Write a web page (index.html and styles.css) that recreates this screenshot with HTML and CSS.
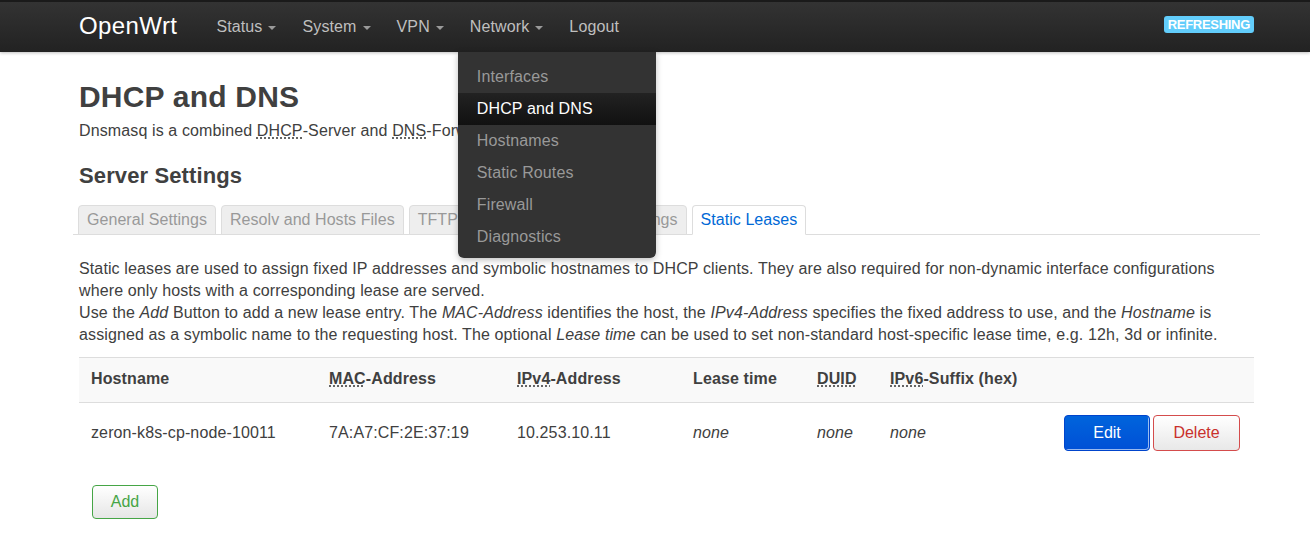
FILE: index.html
```html
<!DOCTYPE html>
<html lang="en">
<head>
<meta charset="utf-8">
<title>OpenWrt - DHCP and DNS</title>
<link rel="stylesheet" href="styles.css">
</head>
<body>
<header class="navbar">
  <div class="nav-inner">
    <a class="brand" href="#">OpenWrt</a>
    <ul class="nav">
      <li><a href="#">Status<span class="caret"></span></a></li>
      <li><a href="#">System<span class="caret"></span></a></li>
      <li><a href="#">VPN<span class="caret"></span></a></li>
      <li class="has-menu"><a href="#">Network<span class="caret"></span></a>
        <ul class="dropdown">
          <li><a href="#">Interfaces</a></li>
          <li class="active"><a href="#">DHCP and DNS</a></li>
          <li><a href="#">Hostnames</a></li>
          <li><a href="#">Static Routes</a></li>
          <li><a href="#">Firewall</a></li>
          <li><a href="#">Diagnostics</a></li>
        </ul>
      </li>
      <li><a href="#">Logout</a></li>
    </ul>
    <span class="badge">REFRESHING</span>
  </div>
</header>

<main class="container">
  <h1 class="title">DHCP and DNS</h1>
  <p class="lead">Dnsmasq is a combined <abbr title="Dynamic Host Configuration Protocol">DHCP</abbr>-Server and <abbr title="Domain Name System">DNS</abbr>-Forwarder for <abbr title="Network Address Translation">NAT</abbr> firewalls</p>

  <h2 class="section">Server Settings</h2>
  <ul class="tabs">
    <li><a href="#">General Settings</a></li>
    <li><a href="#">Resolv and Hosts Files</a></li>
    <li><a href="#">TFTP Settings</a></li>
    <li><a href="#">Advanced Settings</a></li>
    <li class="active"><a href="#">Static Leases</a></li>
  </ul>

  <div class="panel">
    <p class="desc">Static leases are used to assign fixed IP addresses and symbolic hostnames to DHCP clients. They are also required for non-dynamic interface configurations where only hosts with a corresponding lease are served.<br>Use the <em>Add</em> Button to add a new lease entry. The <em>MAC-Address</em> identifies the host, the <em>IPv4-Address</em> specifies the fixed address to use, and the <em>Hostname</em> is assigned as a symbolic name to the requesting host. The optional <em>Lease time</em> can be used to set non-standard host-specific lease time, e.g. 12h, 3d or infinite.</p>

    <table class="leases">
      <colgroup>
        <col class="c1"><col class="c2"><col class="c3"><col class="c4"><col class="c5"><col class="c6"><col>
      </colgroup>
      <thead>
        <tr>
          <th>Hostname</th>
          <th><abbr title="Media Access Control">MAC</abbr>-Address</th>
          <th><abbr title="Internet Protocol Version 4">IPv4</abbr>-Address</th>
          <th>Lease time</th>
          <th><abbr title="DHCP Unique Identifier">DUID</abbr></th>
          <th><abbr title="Internet Protocol Version 6">IPv6</abbr>-Suffix (hex)</th>
          <th></th>
        </tr>
      </thead>
      <tbody>
        <tr>
          <td>zeron-k8s-cp-node-10011</td>
          <td>7A:A7:CF:2E:37:19</td>
          <td>10.253.10.11</td>
          <td><em>none</em></td>
          <td><em>none</em></td>
          <td><em>none</em></td>
          <td class="actions"><button class="btn btn-edit">Edit</button><button class="btn btn-delete">Delete</button></td>
        </tr>
      </tbody>
    </table>

    <div class="add-row"><button class="btn btn-add">Add</button></div>
  </div>
</main>
</body>
</html>
```

FILE: styles.css
```css
* { box-sizing: border-box; }

html, body {
  margin: 0;
  padding: 0;
  background: #fff;
}

body {
  font-family: "Liberation Sans", Arial, Helvetica, sans-serif;
  font-size: 16px;
  line-height: 22px;
  letter-spacing: 0.12px;
  color: #404040;
}

a { text-decoration: none; }

abbr[title] {
  text-decoration: underline dotted;
  text-underline-offset: 2px;
  cursor: help;
}

/* ---------- Navbar ---------- */
.navbar {
  height: 52px;
  background: linear-gradient(to bottom, #333 0%, #222 100%);
  border-top: 2px solid #1a1a1a;
  box-shadow: 0 1px 3px rgba(0, 0, 0, .25);
  position: relative;
  z-index: 10;
}

.nav-inner {
  height: 50px;
  display: flex;
  align-items: center;
  padding: 0 56px 0 79px;
}

.brand {
  color: #fff;
  font-size: 24px;
  line-height: 30px;
  letter-spacing: 0.4px;
  margin-right: 39px;
  margin-top: -2px;
}

.nav {
  list-style: none;
  margin: 0;
  padding: 0;
  display: flex;
  gap: 26px;
  flex: 1;
}

.nav > li { position: relative; }

.nav > li > a {
  color: #bfbfbf;
  font-size: 16px;
  display: flex;
  align-items: center;
}

.caret {
  display: inline-block;
  width: 0;
  height: 0;
  margin-left: 6px;
  margin-top: 2px;
  border-left: 4px solid transparent;
  border-right: 4px solid transparent;
  border-top: 4px solid #9a9a9a;
}

.dropdown {
  position: absolute;
  top: 36px;
  left: -12px;
  width: 198px;
  margin: 0;
  padding: 9px 0 5px;
  list-style: none;
  background: #333;
  border-radius: 0 0 6px 6px;
  box-shadow: 0 2px 6px rgba(0, 0, 0, .25);
}

.dropdown li a {
  display: block;
  height: 32px;
  line-height: 32px;
  padding-left: 19px;
  color: #999;
  font-size: 16px;
}

.dropdown li.active a {
  color: #fff;
  background: linear-gradient(to bottom, #222 0%, #111 100%);
}

.badge {
  background: #62cdfb;
  color: #fff;
  font-weight: bold;
  font-size: 13px;
  line-height: 17px;
  padding: 0 4px;
  border-radius: 3px;
  margin-top: -5px;
  letter-spacing: -0.3px;
}

/* ---------- Content ---------- */
.container {
  margin-left: 73px;
  width: 1187px;
}

.title {
  margin: 27px 0 0 6px;
  font-size: 30px;
  line-height: 36px;
  font-weight: bold;
  letter-spacing: 0.2px;
  color: #404040;
}

.lead {
  margin: 5px 0 0 6px;
}

.section {
  margin: 20px 0 0 6px;
  font-size: 22px;
  line-height: 28px;
  font-weight: bold;
  color: #404040;
}

.tabs {
  list-style: none;
  margin: 15px 0 0;
  padding: 0 0 0 5px;
  display: flex;
  gap: 5px;
  border-bottom: 1px solid #ddd;
}

.tabs li { margin-bottom: -1px; }

.tabs li a {
  display: block;
  padding: 4px 8px;
  line-height: 20px;
  letter-spacing: 0.05px;
  color: #999;
  background: #eee;
  border: 1px solid #ddd;
  border-bottom: 1px solid #ddd;
  border-radius: 4px 4px 0 0;
}

.tabs li.active a {
  color: #0069d6;
  background: #fff;
  border-bottom-color: #fff;
}

.panel {
  padding: 0 6px;
}

.desc {
  margin: 23px 0 0;
}

/* ---------- Table ---------- */
.leases {
  width: 100%;
  margin-top: 11px;
  border-collapse: collapse;
  table-layout: fixed;
}

.leases col.c1 { width: 238px; }
.leases col.c2 { width: 188px; }
.leases col.c3 { width: 176px; }
.leases col.c4 { width: 124px; }
.leases col.c5 { width: 73px; }
.leases col.c6 { width: 170px; }

.leases thead tr {
  background: #f9f9f9;
  border-top: 1px solid #ddd;
  border-bottom: 1px solid #ddd;
}

.leases th {
  text-align: left;
  font-weight: bold;
  padding: 10px 12px 12px;
  white-space: nowrap;
}

.leases td {
  padding: 12px;
  vertical-align: middle;
  white-space: nowrap;
}

.leases td.actions {
  text-align: right;
  padding-right: 14px;
}

/* ---------- Buttons ---------- */
.btn {
  font-family: "Liberation Sans", Arial, Helvetica, sans-serif;
  font-size: 16px;
  line-height: 20px;
  border-radius: 4px;
  cursor: pointer;
}

.btn-edit {
  width: 86px;
  height: 36px;
  color: #fff;
  background: linear-gradient(to bottom, #0064dc 0%, #0050d6 100%);
  border: 1px solid #0044cc;
  box-shadow: inset -1px -1px 0 rgba(255, 255, 255, .6);
}

.btn-delete {
  width: 87px;
  height: 36px;
  margin-left: 3px;
  color: #c9302c;
  background: linear-gradient(to bottom, #fff 0%, #e8e8e8 100%);
  border: 1px solid #d44c4c;
}

.add-row {
  margin-top: 22px;
  padding-left: 13px;
}

.btn-add {
  width: 66px;
  height: 34px;
  color: #46a546;
  background: linear-gradient(to bottom, #fff 0%, #e6e6e6 100%);
  border: 1px solid #46a546;
}
```
